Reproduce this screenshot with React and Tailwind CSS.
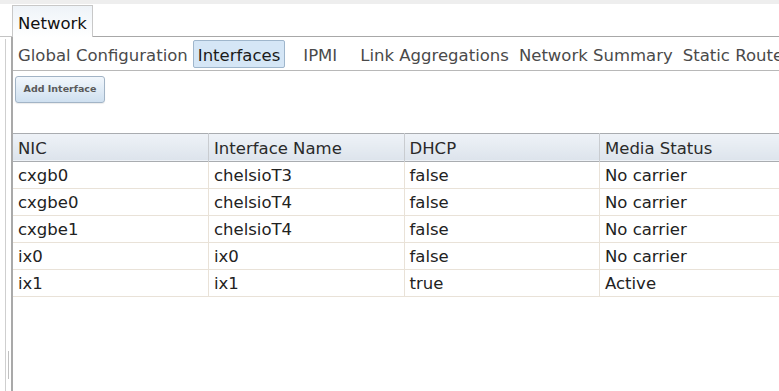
import React from 'react';

const subTabs = ['Global Configuration', 'Interfaces', 'IPMI', 'Link Aggregations', 'Network Summary', 'Static Routes'];

const rows = [
  ['cxgb0', 'chelsioT3', 'false', 'No carrier'],
  ['cxgbe0', 'chelsioT4', 'false', 'No carrier'],
  ['cxgbe1', 'chelsioT4', 'false', 'No carrier'],
  ['ix0', 'ix0', 'false', 'No carrier'],
  ['ix1', 'ix1', 'true', 'Active'],
];

function App() {
  return (
    <div className="w-[779px] h-[391px] overflow-hidden bg-white flex flex-col font-['DejaVu_Sans',sans-serif] text-[#222]">
      {/* top strip */}
      <div className="h-[4px] bg-[#eeeeee] shrink-0" />

      {/* tab strip */}
      <div className="flex items-end h-[33px] shrink-0">
        <div className="w-[12px] h-full border-b border-[#c4c4c4]" />
        <div className="w-[81px] h-[32px] border border-b-0 border-[#c8c8c8] bg-gradient-to-b from-[#eef3f8] to-white pl-[5px] pt-[8px] text-[16.5px] leading-[20px] text-[#111]">
          Network
        </div>
        <div className="flex-1 h-full border-b border-[#a8a8a8]" />
      </div>

      <div className="flex flex-1 min-h-0">
        {/* left gutter */}
        <div className="w-[11px] pl-[5px] pt-[2px] shrink-0">
          <div className="h-full border-l border-[#cfcfcf] flex flex-col">
            <div className="mt-[312px] ml-[2px] w-px h-[28px] bg-[#c0c0c0]" />
          </div>
        </div>

        {/* main panel */}
        <div className="flex-1 border-l-2 border-[#a9a9a9] flex flex-col min-w-0 overflow-hidden">
          <div className="h-[34px] pt-[1px] border-b border-[#b8b8b8] flex items-center whitespace-nowrap text-[16.5px] text-[#4a4a4a]">
            {subTabs.map((t) => (
              <div
                key={t}
                className={
                  t === 'Interfaces'
                    ? 'shrink-0 min-w-[70px] h-[28px] px-[4px] pt-[4px] flex items-center justify-center text-[#1a1a1a] bg-[#d5e6f6] border border-[#9fb6cc] rounded-[2px]'
                    : 'shrink-0 min-w-[70px] h-[28px] px-[5px] pt-[4px] flex items-center justify-center'
                }
              >
                {t}
              </div>
            ))}
          </div>

          <div className="pt-[4px] pl-[2px]">
            <button className="w-[90px] h-[27px] rounded-[3px] border border-[#a2b4c6] bg-gradient-to-b from-[#f2f7fc] to-[#cfe0f0] text-[9.5px] font-bold text-[#5a5a5a] shadow-[0_1px_1px_rgba(0,0,0,0.08)]">
              Add Interface
            </button>
          </div>

          <table className="mt-[30px] table-fixed w-[782px] border-collapse text-[16.5px] text-[#222]">
            <thead>
              <tr className="h-[28px] bg-gradient-to-b from-[#eef2f7] to-[#dde4ec] border-t border-b border-[#a9acb0]">
                {['NIC', 'Interface Name', 'DHCP', 'Media Status'].map((h) => (
                  <th key={h} className="w-[195.5px] text-left font-normal pl-[5px] pr-[4px] pt-[3px] leading-[20px] border-r border-[#c9ccd0] text-[#2a2a2a]">
                    {h}
                  </th>
                ))}
              </tr>
            </thead>
            <tbody>
              {rows.map((r) => (
                <tr key={r[0]} className="h-[27px] border-b border-[#e9e2d8]">
                  {r.map((c, i) => (
                    <td key={i} className="pl-[5px] pr-[4px] pt-[3px] leading-[20px] border-r border-[#e9e2d8]">
                      {c}
                    </td>
                  ))}
                </tr>
              ))}
            </tbody>
          </table>
        </div>
      </div>
    </div>
  );
}

export default App;
